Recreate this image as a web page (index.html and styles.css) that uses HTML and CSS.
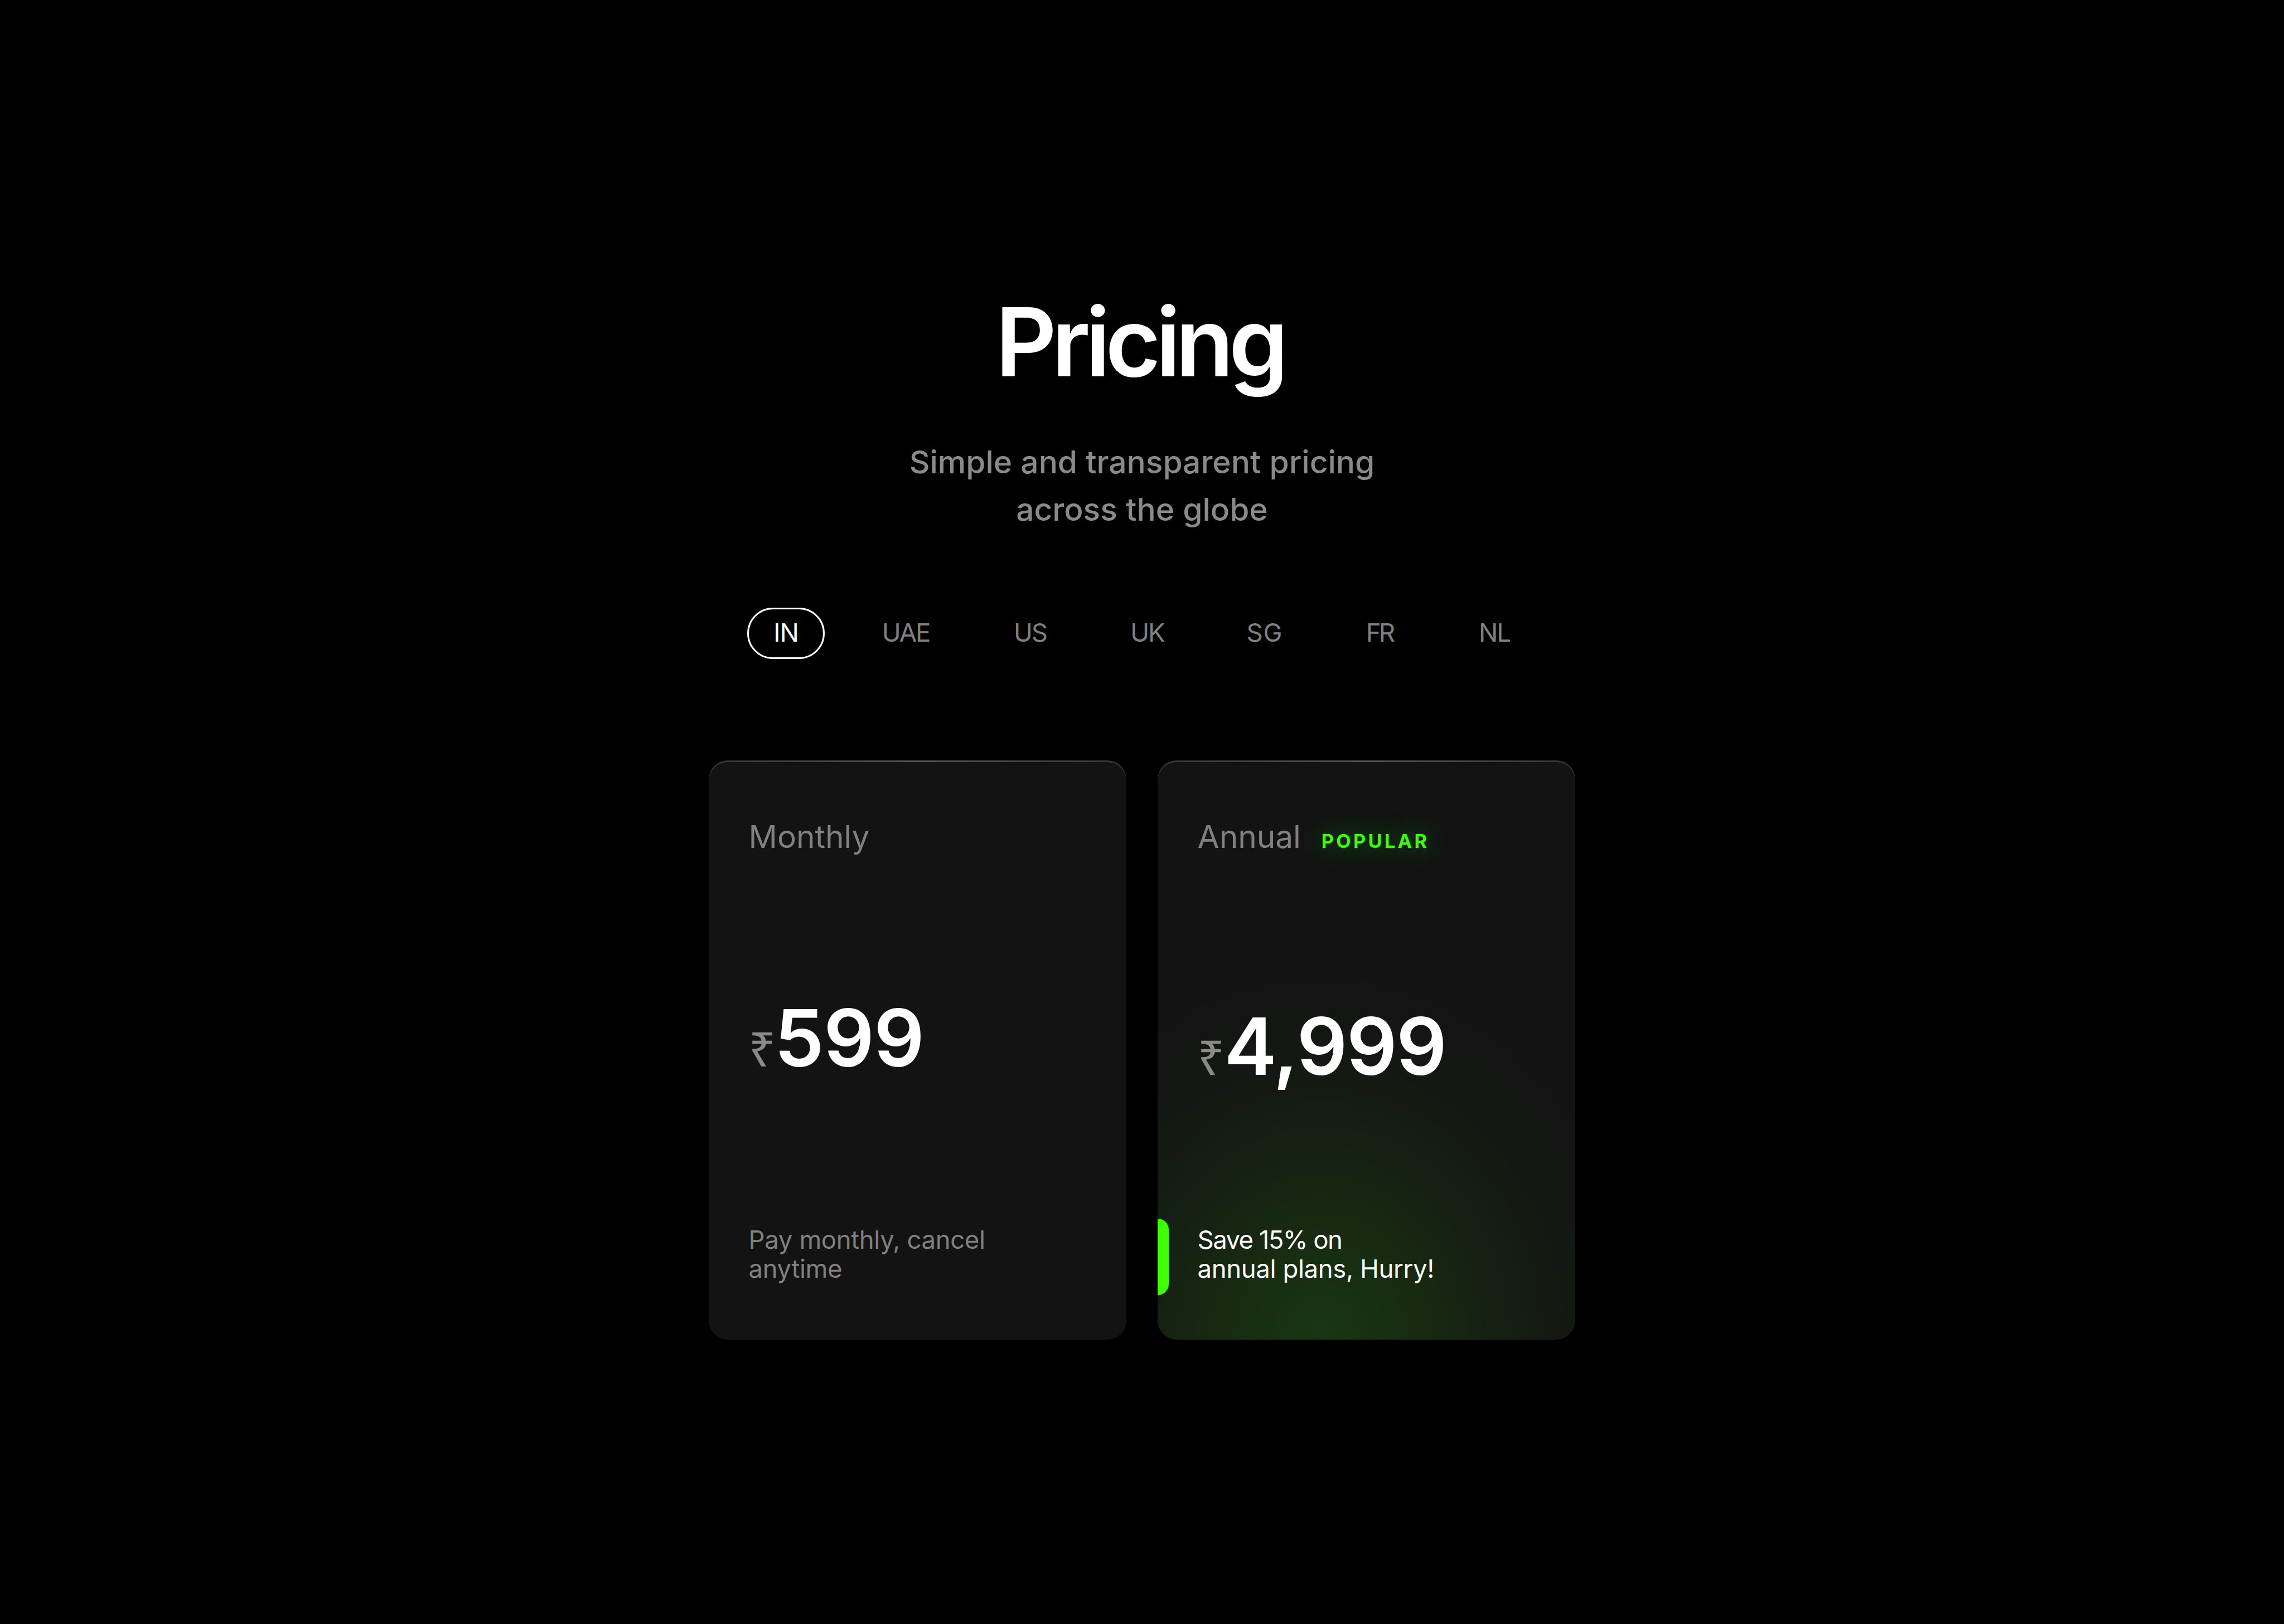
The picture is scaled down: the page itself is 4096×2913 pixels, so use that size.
FILE: index.html
```html
<!DOCTYPE html>
<html lang="en">
<head>
<meta charset="utf-8">
<title>Pricing</title>
<link rel="stylesheet" href="styles.css">
</head>
<body>
<main class="page">
  <h1 class="title">Pricing</h1>
  <p class="subtitle">Simple and transparent pricing<br>across the globe</p>
  <nav class="regions">
    <a class="region region--active">IN</a>
    <a class="region">UAE</a>
    <a class="region">US</a>
    <a class="region">UK</a>
    <a class="region region--sg">SG</a>
    <a class="region region--fr">FR</a>
    <a class="region">NL</a>
  </nav>
  <section class="plans">
    <article class="card">
      <h2 class="plan"><span>Monthly</span></h2>
      <p class="price"><span class="currency">₹</span>599</p>
      <p class="note">Pay monthly, cancel<br>anytime</p>
    </article>
    <article class="card card--annual">
      <h2 class="plan"><span>Annual</span><span class="badge">POPULAR</span></h2>
      <p class="price"><span class="currency">₹</span>4,999</p>
      <p class="note"><span class="note__lead">Save 15% on</span><br>annual plans, Hurry!</p>
    </article>
  </section>
</main>
</body>
</html>
```

FILE: styles.css
```css
html {
  font-size: 94.8148px;
}

body {
  margin: 0;
  background: #000;
  color: #fff;
  font-family: Inter, "Liberation Sans", sans-serif;
}

h1, h2, p {
  margin: 0;
}

.page {
  box-sizing: border-box;
  height: 2913px;
  padding-top: 5.572rem;
  display: flex;
  flex-direction: column;
  align-items: center;
  overflow: hidden;
}

.title {
  padding-right: 0.1rem;
  font-size: 1.8rem;
  line-height: 1.8rem;
  font-weight: 600;
  letter-spacing: -0.095rem;
}

.subtitle {
  margin-top: 0.917rem;
  font-size: 0.6rem;
  line-height: 0.9rem;
  font-weight: 500;
  color: #8a8a8a;
  text-align: center;
}

.regions {
  margin-top: 1.411rem;
  padding-right: 0.044rem;
  display: grid;
  grid-template-columns: 1.47rem 1.962rem 1.598rem 1.692rem 1.574rem 1.696rem 1.484rem;
  column-gap: 0.57rem;
}

.region {
  box-sizing: border-box;
  height: 0.97rem;
  padding: 0 0.035rem 0.046rem 0;
  display: flex;
  align-items: center;
  justify-content: center;
  border: 3px solid transparent;
  border-radius: 0.49rem;
  font-size: 0.48rem;
  font-weight: 400;
  letter-spacing: -0.022rem;
  color: #808080;
}

.region--active {
  padding-right: 0;
  letter-spacing: -0.01rem;
  border-color: #fff;
  color: #fff;
}

.region--sg {
  padding-right: 0;
  letter-spacing: 0.008rem;
}

.region--fr {
  padding-right: 0.06rem;
  letter-spacing: -0.04rem;
}

.plans {
  margin-top: 1.915rem;
  display: flex;
  gap: 0.6rem;
}

.card {
  position: relative;
  box-sizing: border-box;
  width: 7.89rem;
  height: 10.957rem;
  padding: 1.154rem 0.75rem 1.075rem;
  display: flex;
  flex-direction: column;
  border-radius: 0.36rem;
  overflow: hidden;
  isolation: isolate;
  background: linear-gradient(90deg, #333, #555 50%, #333) top / 100% 1rem no-repeat;
}

/* card face, set one hairline below the lit top edge */
.card::before {
  content: "";
  position: absolute;
  inset: 0.035rem 0 0;
  z-index: -1;
  border-radius: 0.36rem;
  background: #131313;
}

.card--annual::before {
  background:
    radial-gradient(6.3rem 7.2rem at 3.1rem 100%,
      rgba(61, 255, 0, 0.145) 0%,
      rgba(61, 255, 0, 0.125) 15%,
      rgba(61, 255, 0, 0.097) 30%,
      rgba(61, 255, 0, 0.058) 50%,
      rgba(61, 255, 0, 0.032) 66%,
      rgba(61, 255, 0, 0.014) 80%,
      rgba(61, 255, 0, 0.005) 92%,
      rgba(61, 255, 0, 0) 100%),
    #131313;
}

/* accent bar beside the savings note */
.card--annual::after {
  content: "";
  position: absolute;
  left: 0;
  top: 8.675rem;
  width: 0.21rem;
  height: 1.44rem;
  border-radius: 0 0.21rem 0.21rem 0;
  background: #3dff00;
}

.plan {
  height: 0.6rem;
  display: flex;
  align-items: baseline;
  font-size: 0.6rem;
  line-height: 0.6rem;
  font-weight: 400;
  letter-spacing: -0.001rem;
  color: #808080;
}

.badge {
  margin-left: 0.39rem;
  font-size: 0.36rem;
  line-height: 0.36rem;
  font-weight: 700;
  letter-spacing: 0.0465rem;
  color: #3dff00;
  text-shadow: 0 0 0.5rem rgba(20, 255, 50, 0.5);
}

.price {
  margin-top: 2.743rem;
  font-size: 1.5rem;
  line-height: 1.5rem;
  font-weight: 600;
  letter-spacing: -0.01rem;
}

.card--annual .price {
  margin-top: 2.898rem;
  letter-spacing: -0.018rem;
}

.currency {
  margin-right: -0.02rem;
  font-family: "Noto Sans", sans-serif;
  font-size: 0.9rem;
  line-height: 0.9rem;
  font-weight: 400;
  color: #8a8a8a;
}

.card--annual .currency {
  margin-right: 0.005rem;
}

.note {
  margin-top: auto;
  font-size: 0.48rem;
  line-height: 0.54rem;
  font-weight: 400;
  letter-spacing: -0.004rem;
  color: #808080;
}

.card--annual .note {
  color: #fff;
}

.note__lead {
  letter-spacing: -0.0165rem;
}
```
